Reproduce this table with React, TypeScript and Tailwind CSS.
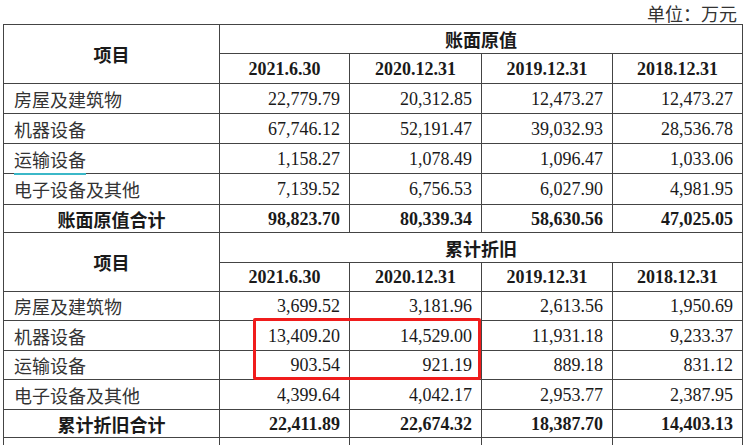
import React from 'react';

type Row = { name: string; values: string[]; underline?: boolean };

const dates = ['2021.6.30', '2020.12.31', '2019.12.31', '2018.12.31'];

const original: Row[] = [
  { name: '房屋及建筑物', values: ['22,779.79', '20,312.85', '12,473.27', '12,473.27'] },
  { name: '机器设备', values: ['67,746.12', '52,191.47', '39,032.93', '28,536.78'] },
  { name: '运输设备', values: ['1,158.27', '1,078.49', '1,096.47', '1,033.06'], underline: true },
  { name: '电子设备及其他', values: ['7,139.52', '6,756.53', '6,027.90', '4,981.95'] },
];

const depreciation: Row[] = [
  { name: '房屋及建筑物', values: ['3,699.52', '3,181.96', '2,613.56', '1,950.69'] },
  { name: '机器设备', values: ['13,409.20', '14,529.00', '11,931.18', '9,233.37'] },
  { name: '运输设备', values: ['903.54', '921.19', '889.18', '831.12'] },
  { name: '电子设备及其他', values: ['4,399.64', '4,042.17', '2,953.77', '2,387.95'] },
];

const cjk = "font-['Noto_Sans_CJK_SC',sans-serif]";
const num = "font-['Liberation_Serif','Noto_Sans_CJK_SC',serif]";
const cell = 'border border-[#444] p-0';

function Section({
  title,
  rows,
  total,
  totals,
  heights,
}: {
  title: string;
  rows: Row[];
  total: string;
  totals: string[];
  heights: string[];
}) {
  return (
    <>
      <tr className={heights[0]}>
        <td rowSpan={2} className={`${cell} text-center font-bold ${cjk}`}>
          项目
        </td>
        <td colSpan={4} className={`${cell} text-center font-bold ${cjk}`}>
          {title}
        </td>
      </tr>
      <tr className={heights[1]}>
        {dates.map((d) => (
          <td key={d} className={`${cell} text-center font-bold ${num}`}>
            {d}
          </td>
        ))}
      </tr>
      {rows.map((r, i) => (
        <tr key={r.name} className={heights[i + 2]}>
          <td className={`${cell} pl-[10px] text-[#333] ${cjk}`}>
            <span className={r.underline ? 'border-b-2 border-[#3bb8c8] pb-[1px]' : ''}>{r.name}</span>
          </td>
          {r.values.map((v, j) => (
            <td key={j} className={`${cell} pr-[9px] text-right ${num}`}>
              {v}
            </td>
          ))}
        </tr>
      ))}
      <tr className={heights[6]}>
        <td className={`${cell} text-center font-bold ${cjk}`}>{total}</td>
        {totals.map((v, j) => (
          <td key={j} className={`${cell} pr-[9px] text-right font-bold ${num}`}>
            {v}
          </td>
        ))}
      </tr>
    </>
  );
}

export default function App() {
  return (
    <div className="relative h-[445px] w-[747px] overflow-hidden bg-white text-[18px] leading-none text-[#1a1a1a]">
      <div className={`h-[24px] pr-[10px] text-right text-[18px] text-[#333] ${cjk}`}>
        <span className="inline-block leading-[26px]">单位：万元</span>
      </div>
      <table className="ml-[3px] w-[739px] table-fixed border-collapse">
        <colgroup>
          <col className="w-[216px]" />
          <col className="w-[130px]" />
          <col className="w-[132px]" />
          <col className="w-[131px]" />
          <col className="w-[130px]" />
        </colgroup>
        <tbody>
          <Section
            title="账面原值"
            rows={original}
            total="账面原值合计"
            totals={['98,823.70', '80,339.34', '58,630.56', '47,025.05']}
            heights={['h-[29px]', 'h-[30px]', 'h-[30px]', 'h-[30px]', 'h-[30px]', 'h-[31px]', 'h-[28px]']}
          />
          <Section
            title="累计折旧"
            rows={depreciation}
            total="累计折旧合计"
            totals={['22,411.89', '22,674.32', '18,387.70', '14,403.13']}
            heights={['h-[30px]', 'h-[29px]', 'h-[29px]', 'h-[30px]', 'h-[29px]', 'h-[30px]', 'h-[28px]']}
          />
          <tr className="h-[30px]">
            <td className={cell}></td>
            <td className={cell}></td>
            <td className={cell}></td>
            <td className={cell}></td>
            <td className={cell}></td>
          </tr>
        </tbody>
      </table>
      {/* red highlight box */}
      <div className="absolute left-[253px] top-[318px] h-[62px] w-[228px] rounded-[2px] border-[3px] border-[#f01c1c]" />
    </div>
  );
}
